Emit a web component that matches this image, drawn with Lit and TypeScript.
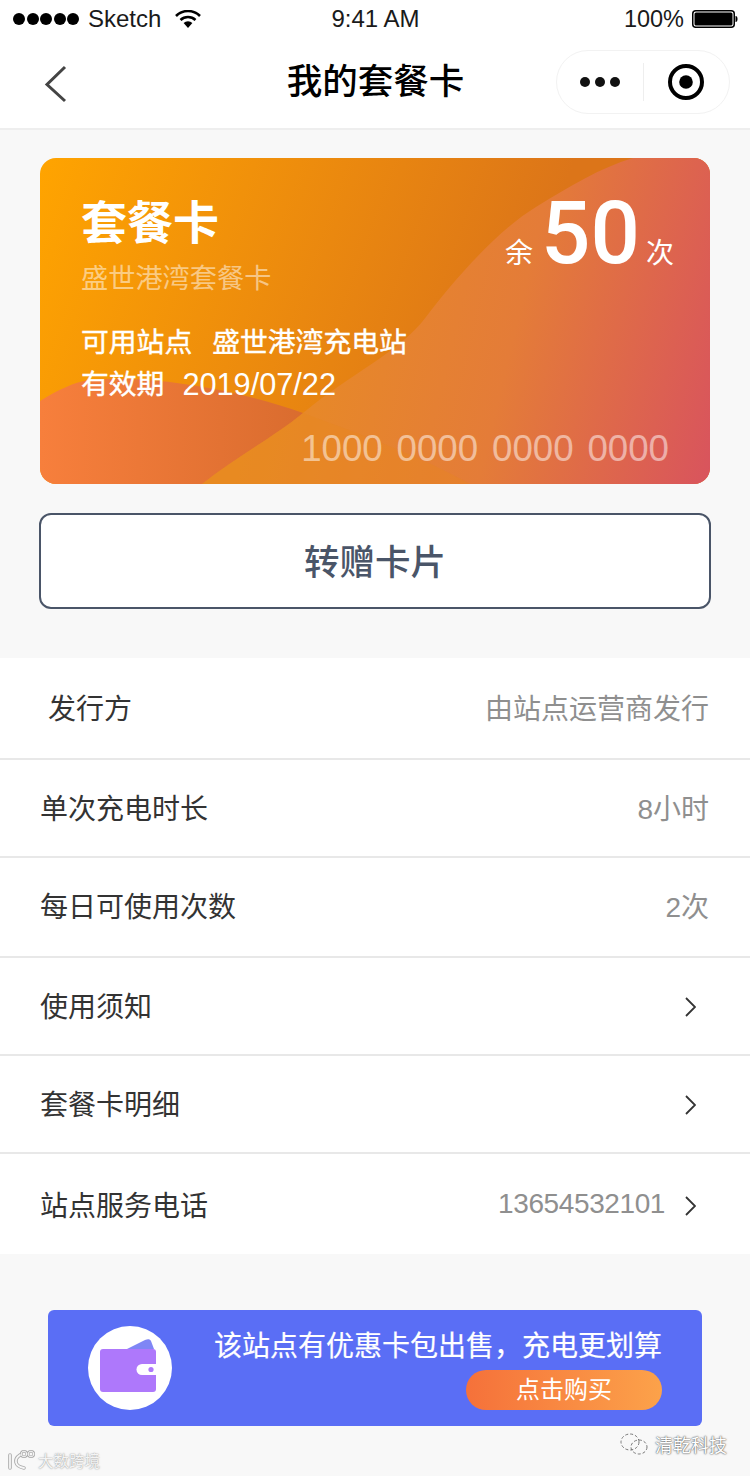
import {css, html, LitElement} from 'lit';
import {customElement} from 'lit/decorators.js';

const chevron = html`<svg class="chev" width="11" height="20" viewBox="0 0 11 20"><path d="M1 1 L10 10 L1 19" fill="none" stroke="#333" stroke-width="1.8"/></svg>`;

@customElement("app-root")
export default class AppRoot extends LitElement {
    static styles = css`
        :host {
            display: block;
            width: 750px;
            height: 1476px;
            position: relative;
            overflow: hidden;
            background: #f8f8f8;
            font-family: "Liberation Sans", "Noto Sans CJK SC", sans-serif;
            color: #333;
        }

        .status {
            height: 40px;
            box-sizing: border-box;
            background: #fff;
            display: grid;
            grid-template-columns: 1fr auto 1fr;
            align-items: center;
            padding: 0 12px 2px 13px;
            font-size: 24px;
            color: #1a1a1a;
        }
        .status-left { display: flex; align-items: center; }
        .dots { display: flex; gap: 1.5px; margin-right: 9px; }
        .dots i { width: 12px; height: 12px; border-radius: 50%; background: #000; }
        .wifi { margin-left: 14px; }
        .status-right { display: flex; align-items: center; justify-content: flex-end; gap: 8px; font-size: 23.5px; }

        .nav {
            height: 88px;
            background: #fff;
            border-bottom: 2px solid #eee;
            display: flex;
            align-items: center;
            justify-content: center;
            position: relative;
            margin-bottom: 28px;
        }
        .back { position: absolute; left: 44px; top: 25px; }
        .title { font-size: 35.5px; font-weight: 500; color: #000; margin-top: -11px; margin-left: 1px; }
        .capsule {
            position: absolute;
            left: 556px;
            top: 10px;
            width: 174px;
            height: 64px;
            box-sizing: border-box;
            border: 1px solid #f2f2f2;
            border-radius: 32px;
            display: flex;
            align-items: center;
        }
        .more { width: 86px; display: flex; justify-content: center; gap: 5px; }
        .more i { width: 10px; height: 10px; border-radius: 50%; background: #111; }
        .sep { width: 1px; height: 38px; background: #eee; }
        .target { margin-left: 24px; display: block; }

        .card {
            margin: 0 40px;
            height: 326px;
            border-radius: 16px;
            position: relative;
            overflow: hidden;
            color: #fff;
            background: linear-gradient(110deg, #ffa400 0%, #dc7519 68%);
        }
        .waves { position: absolute; left: 0; top: 0; }
        .card-body {
            position: relative;
            height: 100%;
            box-sizing: border-box;
            padding: 36px 36px 0 41px;
        }
        .card-top { display: flex; justify-content: space-between; }
        .card-name { font-size: 46px; font-weight: 700; line-height: 58px; }
        .card-sub { font-size: 27.2px; line-height: 40px; color: rgba(255,255,255,.5); margin-top: 7px; }
        .remain { display: flex; align-items: baseline; font-size: 28px; margin-top: -6px; }
        .remain b {
            font-family: Roboto, "Liberation Sans", sans-serif;
            font-weight: 500;
            font-size: 87px;
            line-height: 90px;
            margin: 0 6px 0 8px;
        }
        .card-line {
            font-size: 27.8px;
            line-height: 42px;
            display: flex;
            gap: 20px;
            -webkit-text-stroke: .4px #fff;
        }
        .card-date { font-size: 30.7px; margin-left: -2px; -webkit-text-stroke: 0; }
        .lines { margin-top: 23px; }
        .card-no {
            position: absolute;
            right: 41px;
            top: 268px;
            font-size: 36.7px;
            word-spacing: 3.6px;
            line-height: 46px;
            color: rgba(255,255,255,.5);
        }

        .gift {
            margin: 29px 39px 0 39px;
            height: 96px;
            box-sizing: border-box;
            border: 2px solid #4a5568;
            border-radius: 12px;
            background: #fff;
            display: flex;
            align-items: center;
            justify-content: center;
            padding-bottom: 4px;
            font-size: 35.5px;
            font-weight: 500;
            color: #4a5568;
        }

        .list { margin-top: 49px; background: #fff; }
        .row {
            height: 98px;
            box-sizing: border-box;
            display: flex;
            align-items: center;
            justify-content: space-between;
            padding: 0 41px 2px 40px;
            border-bottom: 2px solid #e8e8e8;
            font-size: 28px;
        }
        .row.first { height: 102px; }
        .row.first .label { margin-left: 8px; }
        .row.tall { height: 100px; padding-bottom: 4px; }
        .row.last { height: 100px; border-bottom: 0; padding-bottom: 0; }
        .value { color: #8f8f8f; }
        .row-end { display: flex; align-items: center; gap: 20px; padding-right: 13px; }
        .chev { display: block; margin-top: 4px; }
        .phone { letter-spacing: -.4px; }

        .banner {
            position: absolute;
            left: 48px;
            top: 1310px;
            width: 654px;
            height: 116px;
            border-radius: 6px;
            background: #5a6ef5;
            display: flex;
            box-sizing: border-box;
            padding: 16px 40px;
            color: #fff;
        }
        .disc {
            width: 84px;
            height: 84px;
            border-radius: 50%;
            background: #fff;
            display: flex;
            align-items: center;
            justify-content: center;
        }
        .wallet { margin: 0 4px 6px 0; }
        .banner-main { flex: 1; display: flex; flex-direction: column; align-items: flex-end; }
        .banner-text {
            font-size: 28px;
            line-height: 38px;
            margin-top: 2px;
            white-space: nowrap;
            -webkit-text-stroke: .2px #fff;
        }
        .buy {
            width: 196px;
            height: 40px;
            margin-top: 4px;
            border-radius: 20px;
            background: linear-gradient(90deg, #f5713a, #fca24a);
            font-size: 24px;
            line-height: 40px;
            text-align: center;
        }

        .mark {
            position: absolute;
            display: flex;
            align-items: center;
            color: #fff;
            text-shadow: 0 0 2px #555, 0 0 1px #555;
        }
        .mark-right { left: 620px; top: 1431px; font-size: 18px; gap: 7px; }
        .mark-left { left: 6px; top: 1448px; font-size: 15.5px; gap: 2px; color: #f4f4f4; text-shadow: 0 0 1.5px #777; }
    `;

    render() {
        return html`
            <div class="status">
                <div class="status-left">
                    <div class="dots"><i></i><i></i><i></i><i></i><i></i></div>
                    Sketch
                    <svg class="wifi" width="26" height="18" viewBox="0 0 26 18">
                        <path d="M1 6 A17 17 0 0 1 25 6" fill="none" stroke="#000" stroke-width="2.6"/>
                        <path d="M5.5 10 A11 11 0 0 1 20.5 10" fill="none" stroke="#000" stroke-width="2.6"/>
                        <path d="M13 18 L8.6 13 A6.5 6.5 0 0 1 17.4 13 Z" fill="#000"/>
                    </svg>
                </div>
                <div>9:41 AM</div>
                <div class="status-right">
                    100%
                    <svg width="46" height="20" viewBox="0 0 46 20">
                        <rect x=".75" y="1.75" width="41.5" height="16.5" rx="3" fill="#fff" stroke="#000" stroke-width="1.5"/>
                        <rect x="2.5" y="3.5" width="38" height="13" rx="1.5" fill="#000"/>
                        <path d="M43.5 7 C45 7 45.5 8 45.5 10 C45.5 12 45 13 43.5 13 Z" fill="#000"/>
                    </svg>
                </div>
            </div>

            <div class="nav">
                <svg class="back" width="24" height="38" viewBox="0 0 24 38"><path d="M21 2 L3 19.5 L21 36" fill="none" stroke="#444" stroke-width="3"/></svg>
                <div class="title">我的套餐卡</div>
                <div class="capsule">
                    <div class="more"><i></i><i></i><i></i></div>
                    <div class="sep"></div>
                    <svg class="target" width="36" height="36" viewBox="0 0 36 36">
                        <circle cx="18" cy="18" r="16" fill="none" stroke="#000" stroke-width="4"/>
                        <circle cx="18" cy="18" r="6.8" fill="#000"/>
                    </svg>
                </div>
            </div>

            <div class="card">
                <svg class="waves" width="670" height="326" viewBox="0 0 670 326">
                    <defs>
                        <linearGradient id="low" x1="0" y1="0" x2="1" y2="0">
                            <stop offset="0" stop-color="#f77f3c"/>
                            <stop offset=".65" stop-color="#d86b2e"/>
                        </linearGradient>
                        <linearGradient id="high" gradientUnits="userSpaceOnUse" x1="220" y1="220" x2="680" y2="330">
                            <stop offset="0" stop-color="#e88c24"/>
                            <stop offset=".5" stop-color="#e47c38"/>
                            <stop offset="1" stop-color="#d8525f"/>
                        </linearGradient>
                    </defs>
                    <path d="M0 243 C18 232 34 224 50 222 C110 216 200 232 263 255 C320 276 380 298 430 326 L0 326 Z" fill="url(#low)"/>
                    <path d="M162 326 C195 300 235 278 263 255 C310 216 360 194 386 159 C410 127 456 73 496 49 C530 28 560 10 593 0 L670 0 L670 326 Z" fill="url(#high)"/>
                    <path d="M263 255 C320 276 380 298 430 326 L162 326 C195 300 235 278 263 255 Z" fill="#e8881c" opacity=".35"/>
                </svg>
                <div class="card-body">
                    <div class="card-top">
                        <div>
                            <div class="card-name">套餐卡</div>
                            <div class="card-sub">盛世港湾套餐卡</div>
                        </div>
                        <div class="remain">余<b>50</b>次</div>
                    </div>
                    <div class="lines">
                        <div class="card-line"><span>可用站点</span><span>盛世港湾充电站</span></div>
                        <div class="card-line"><span>有效期</span><span class="card-date">2019/07/22</span></div>
                    </div>
                    <div class="card-no">1000 0000 0000 0000</div>
                </div>
            </div>

            <div class="gift">转赠卡片</div>

            <div class="list">
                <div class="row first"><span class="label">发行方</span><span class="value">由站点运营商发行</span></div>
                <div class="row"><span>单次充电时长</span><span class="value">8小时</span></div>
                <div class="row tall"><span>每日可使用次数</span><span class="value">2次</span></div>
                <div class="row"><span>使用须知</span><div class="row-end">${chevron}</div></div>
                <div class="row"><span>套餐卡明细</span><div class="row-end">${chevron}</div></div>
                <div class="row last"><span>站点服务电话</span><div class="row-end"><span class="value phone">13654532101</span>${chevron}</div></div>
            </div>

            <div class="banner">
                <div class="disc">
                    <svg class="wallet" width="56" height="54" viewBox="0 0 56 54">
                        <path d="M27 11 L45 2 C48 .5 50 1 51 3 L54 11 Z" fill="#7f86f5"/>
                        <rect x="0" y="11" width="56" height="43" rx="3" fill="#ae78fb"/>
                        <path d="M56 26 H42 A5.5 5.5 0 0 0 42 37 H56 Z" fill="#fff"/>
                        <circle cx="51" cy="31.5" r="2.6" fill="#ae78fb"/>
                    </svg>
                </div>
                <div class="banner-main">
                    <div class="banner-text">该站点有优惠卡包出售，充电更划算</div>
                    <div class="buy">点击购买</div>
                </div>
            </div>

            <div class="mark mark-right">
                <svg width="28" height="24" viewBox="0 0 28 24" fill="none" stroke="#777" stroke-width="1" stroke-dasharray="3 2">
                    <ellipse cx="10" cy="10" rx="9" ry="8"/>
                    <ellipse cx="19" cy="15" rx="8" ry="7"/>
                </svg>
                <span>清乾科技</span>
            </div>
            <div class="mark mark-left">
                <svg width="30" height="24" viewBox="0 0 30 24" fill="none" stroke-linecap="round">
                    <g stroke="#aaa" stroke-width="3.6">
                        <path d="M4 7 V20 M14 7 C8 11 8 18 18 20"/>
                        <circle cx="18" cy="6" r="2.8" stroke-width="2.6"/><circle cx="25" cy="6" r="2.8" stroke-width="2.6"/>
                    </g>
                    <g stroke="#f6f6f6" stroke-width="1.8">
                        <path d="M4 7 V20 M14 7 C8 11 8 18 18 20"/>
                        <circle cx="18" cy="6" r="2.8" stroke-width="1"/><circle cx="25" cy="6" r="2.8" stroke-width="1"/>
                    </g>
                </svg>
                <span>大数跨境</span>
            </div>
        `;
    }
}
